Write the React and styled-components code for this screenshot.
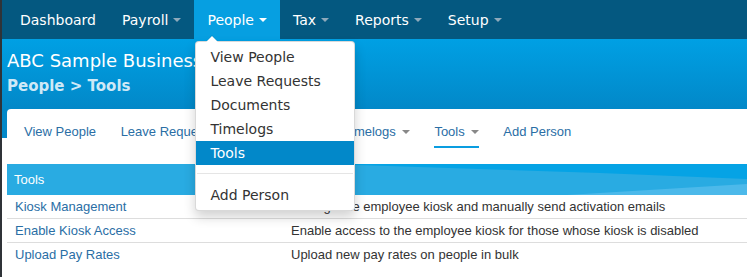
import React from "react";
import styled, { createGlobalStyle } from "styled-components";

const Global = createGlobalStyle`
  html, body { margin: 0; padding: 0; background: #2f3338; }
  * { box-sizing: border-box; }
`;

const Page = styled.div`
  margin-left: 2px;
  min-height: 100vh;
  background: #ffffff;
  font-family: "Liberation Sans", Arial, sans-serif;
`;

const TopNav = styled.nav`
  height: 39px;
  background: #045880;
  display: flex;
  padding-left: 5px;
  font-family: "DejaVu Sans", Verdana, sans-serif;
  font-size: 14px;
`;

const NavItem = styled.div`
  position: relative;
  display: flex;
  align-items: center;
  padding: 0 13px 0 13px;
  height: 39px;
  color: #ffffff;
  background: ${(p) => (p.$active ? "#069fe1" : "transparent")};
`;

const Caret = styled.span`
  display: inline-block;
  width: 0;
  height: 0;
  margin-left: ${(p) => p.$gap || 5}px;
  border-top: 4px solid ${(p) => p.$color};
  border-left: 4px solid transparent;
  border-right: 4px solid transparent;
`;

const Menu = styled.div`
  position: absolute;
  top: 41px;
  left: 1px;
  width: 160px;
  background: #ffffff;
  border: 1px solid rgba(0, 0, 0, 0.15);
  border-radius: 4px;
  box-shadow: 0 6px 12px rgba(0, 0, 0, 0.18);
  padding: 3px 0;
  z-index: 10;

  &::before {
    content: "";
    position: absolute;
    top: -7px;
    left: 10px;
    border-left: 6px solid transparent;
    border-right: 6px solid transparent;
    border-bottom: 7px solid rgba(0, 0, 0, 0.12);
  }
  &::after {
    content: "";
    position: absolute;
    top: -6px;
    left: 10px;
    border-left: 6px solid transparent;
    border-right: 6px solid transparent;
    border-bottom: 6px solid #ffffff;
  }
`;

const MenuItem = styled.div`
  height: 24px;
  line-height: 24px;
  padding: 0 15px 0 14px;
  color: ${(p) => (p.$active ? "#ffffff" : "#333333")};
  background: ${(p) => (p.$active ? "#0288c9" : "transparent")};
  white-space: nowrap;
`;

const Divider = styled.div`
  height: 1px;
  margin: 8px 1px 9px;
  background: #e5e5e5;
`;

const Header = styled.header`
  padding: 11px 0 0 5px;
  background: linear-gradient(to bottom, #00a0e4 0px, #0288c8 70px) no-repeat;
  background-size: 100% 99px;
`;

const Title = styled.h1`
  margin: 0;
  font-family: "DejaVu Sans", Verdana, sans-serif;
  font-weight: normal;
  font-size: 18px;
  line-height: 22px;
  color: #ffffff;
  white-space: nowrap;
`;

const Crumb = styled.div`
  margin-top: 5px;
  font-family: "DejaVu Sans", Verdana, sans-serif;
  font-weight: bold;
  font-size: 15px;
  line-height: 18px;
  color: #cfe9f7;
`;

const TabsCard = styled.div`
  margin-top: 14px;
  background: #ffffff;
  border-radius: 4px 0 0 0;
  display: flex;
  gap: 24.6px;
  padding-left: 17px;
  font-size: 13px;
`;

const Tab = styled.div`
  display: flex;
  align-items: center;
  padding: 15px 0 7px;
  line-height: 15px;
  color: #2a6ea5;
  border-bottom: 2px solid ${(p) => (p.$active ? "#0a9de0" : "transparent")};
`;

const Table = styled.div`
  margin: 16px 0 0 5px;
  font-size: 13px;
`;

const TableHead = styled.div`
  position: relative;
  height: 31px;
  display: flex;
  align-items: center;
  padding-left: 7px;
  background: #29abe2;
  color: #ffffff;
  overflow: hidden;

  & > svg {
    position: absolute;
    inset: 0;
    width: 100%;
    height: 100%;
  }
  & > span {
    position: relative;
  }
`;

const Row = styled.div`
  display: grid;
  grid-template-columns: 276px 1fr;
  height: 24px;
  align-items: center;
  border-bottom: 1px solid ${(p) => (p.$last ? "transparent" : "#dddddd")};
`;

const Cell = styled.div`
  padding-left: 8px;
  white-space: nowrap;
  color: ${(p) => (p.$link ? "#2a6ea5" : "#333333")};
`;

const navItems = [
  { label: "Dashboard" },
  { label: "Payroll", caret: true },
  { label: "People", caret: true, active: true },
  { label: "Tax", caret: true },
  { label: "Reports", caret: true },
  { label: "Setup", caret: true },
];

const tabs = [
  { label: "View People" },
  { label: "Leave Requests" },
  { label: "Documents", caret: true },
  { label: "Timelogs", caret: true },
  { label: "Tools", caret: true, active: true },
  { label: "Add Person" },
];

const rows = [
  ["Kiosk Management", "Manage the employee kiosk and manually send activation emails"],
  ["Enable Kiosk Access", "Enable access to the employee kiosk for those whose kiosk is disabled"],
  ["Upload Pay Rates", "Upload new pay rates on people in bulk"],
];

export default function App() {
  return (
    <>
      <Global />
      <Page>
        <TopNav>
          {navItems.map((n) => (
            <NavItem key={n.label} $active={n.active}>
              {n.label}
              {n.caret && <Caret $color={n.active ? "#ffffff" : "#8ea9bb"} />}
              {n.active && (
                <Menu>
                  <MenuItem>View People</MenuItem>
                  <MenuItem>Leave Requests</MenuItem>
                  <MenuItem>Documents</MenuItem>
                  <MenuItem>Timelogs</MenuItem>
                  <MenuItem $active>Tools</MenuItem>
                  <Divider />
                  <MenuItem>Add Person</MenuItem>
                </Menu>
              )}
            </NavItem>
          ))}
        </TopNav>
        <Header>
          <Title>ABC Sample Business</Title>
          <Crumb>People &gt; Tools</Crumb>
          <TabsCard>
            {tabs.map((t) => (
              <Tab key={t.label} $active={t.active}>
                {t.label}
                {t.caret && <Caret $color="#888888" $gap={6} />}
              </Tab>
            ))}
          </TabsCard>
        </Header>
        <Table>
          <TableHead>
            <svg viewBox="0 0 740 31" preserveAspectRatio="none">
              <polygon points="320,0 740,0 740,15 593,9" fill="#05a3e5" />
              <polygon points="560,31 740,20 740,31" fill="#4cb9ea" />
            </svg>
            <span>Tools</span>
          </TableHead>
          {rows.map((r, i) => (
            <Row key={r[0]} $last={i === rows.length - 1}>
              <Cell $link>{r[0]}</Cell>
              <Cell>{r[1]}</Cell>
            </Row>
          ))}
        </Table>
      </Page>
    </>
  );
}
